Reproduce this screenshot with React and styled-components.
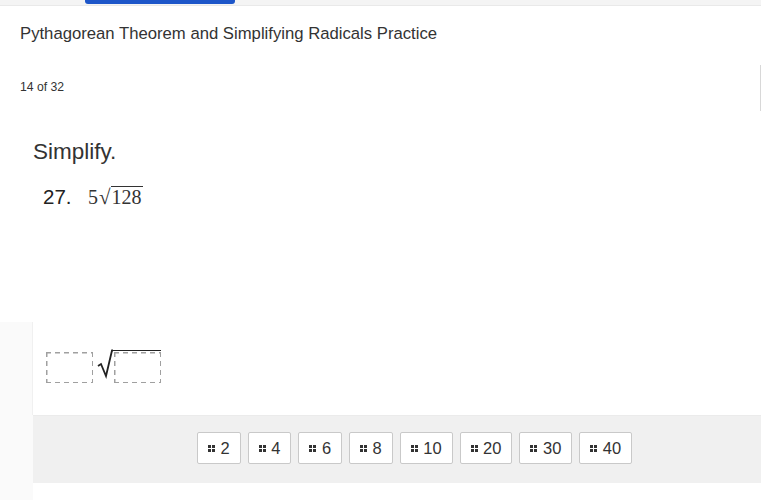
import React from "react";
import styled, { createGlobalStyle } from "styled-components";

const GlobalStyle = createGlobalStyle`
  html, body {
    margin: 0;
    padding: 0;
    background: #ffffff;
    font-family: 'Liberation Sans', Arial, sans-serif;
    color: #333333;
  }
`

const Page = styled.div`
  width: 761px;
  height: 500px;
  overflow: hidden;
  position: relative;
  background: linear-gradient(to right, #fafafa 0, #fafafa 33px, #ffffff 33px);
`

const TopBar = styled.div`
  height: 5px;
  background: #f4f4f4;
  border-bottom: 1px solid #e9e9e9;
  padding-left: 85px;
`

const TabMarker = styled.div`
  width: 150px;
  height: 4px;
  background: #1d56c9;
  border-radius: 0 0 3px 3px;
`

const Header = styled.div`
  background: #ffffff;
  padding: 19px 20px 0 20px;
  height: 110px;
  box-sizing: border-box;
`

const Title = styled.div`
  font-size: 16.7px;
  line-height: 18px;
  color: #333333;
`

const Counter = styled.div`
  margin-top: 37px;
  font-size: 12.2px;
  line-height: 14px;
  color: #333333;
`

const EdgeMark = styled.div`
  position: absolute;
  right: 0;
  top: 65px;
  width: 1px;
  height: 46px;
  background: #d8d8d8;
`

const Question = styled.div`
  padding: 23px 0 0 33px;
  height: 206px;
  box-sizing: border-box;
  background: #ffffff;
`

const Prompt = styled.div`
  font-size: 22.5px;
  line-height: 26px;
  color: #333333;
`

const ItemRow = styled.div`
  display: flex;
  align-items: baseline;
  margin-top: 20px;
  padding-left: 10px;
`

const ItemNum = styled.span`
  font-size: 20.5px;
  color: #222222;
  width: 45px;
`

const MathText = styled.span`
  font-family: 'Liberation Serif', 'Times New Roman', serif;
  font-size: 20px;
  color: #333333;
  display: inline-flex;
  align-items: baseline;
`

const RadSign = styled.span`
  font-size: 21px;
  margin-left: 1px;
`

const Radicand = styled.span`
  border-top: 1.5px solid #333333;
  padding: 0 1px 0 1px;
  line-height: 20px;
`

const AnswerPanel = styled.div`
  margin-left: 33px;
  height: 93px;
  background: #ffffff;
  box-shadow: -1px 0 0 #f0f0f0;
  padding: 30px 0 0 13px;
  box-sizing: border-box;
  display: flex;
  align-items: flex-start;
`

const dash = "#a0a0a0";

const DropBox = styled.div`
  width: 47px;
  height: 31px;
  box-sizing: border-box;
  background-image:
    repeating-linear-gradient(to right, ${dash} 0 5px, transparent 5px 9px),
    repeating-linear-gradient(to right, ${dash} 0 5px, transparent 5px 9px),
    repeating-linear-gradient(to bottom, ${dash} 0 5px, transparent 5px 9px),
    repeating-linear-gradient(to bottom, ${dash} 0 5px, transparent 5px 9px);
  background-size: 100% 1.5px, 100% 1.5px, 1.5px 100%, 1.5px 100%;
  background-position: 0 0, 0 100%, 0 0, 100% 0;
  background-repeat: no-repeat;
`

const AnswerRoot = styled.div`
  display: flex;
  align-items: flex-start;
  margin-left: 4px;
`

const RootSvg = styled.svg`
  display: block;
  margin-top: -3px;
`

const RootBody = styled.div`
  border-top: 1.5px solid #222222;
  margin-top: -2px;
  padding: 1px 0 0 1px;
`

const Tray = styled.div`
  margin-left: 33px;
  height: 68px;
  background: #f0f0f0;
  border-top: 1px solid #ebebeb;
  box-sizing: border-box;
  padding: 16px 0 0 164px;
  display: flex;
  gap: 7px;
`

const Chip = styled.div`
  height: 32px;
  box-sizing: border-box;
  padding: 0 10px;
  display: flex;
  align-items: center;
  gap: 5.5px;
  background: #ffffff;
  border: 1px solid #c9c9c9;
  border-radius: 2px;
  font-size: 16.5px;
  color: #333333;
`

const Grip = () => (
  <svg width="7" height="7" viewBox="0 0 7 7">
    <rect x="0" y="0" width="3" height="3" fill="#333" />
    <rect x="4" y="0" width="3" height="3" fill="#333" />
    <rect x="0" y="4" width="3" height="3" fill="#333" />
    <rect x="4" y="4" width="3" height="3" fill="#333" />
  </svg>
);

const choices = [2, 4, 6, 8, 10, 20, 30, 40];

const App = () => {
  return (
    <>
      <GlobalStyle />
      <Page>
        <TopBar>
          <TabMarker />
        </TopBar>
        <Header>
          <Title>Pythagorean Theorem and Simplifying Radicals Practice</Title>
          <Counter>14 of 32</Counter>
        </Header>
        <EdgeMark />
        <Question>
          <Prompt>Simplify.</Prompt>
          <ItemRow>
            <ItemNum>27.</ItemNum>
            <MathText>
              5<RadSign>√</RadSign>
              <Radicand>128</Radicand>
            </MathText>
          </ItemRow>
        </Question>
        <AnswerPanel>
          <DropBox />
          <AnswerRoot>
            <RootSvg width="16" height="30" viewBox="0 0 16 30">
              <path d="M1 17 L4 15 L9 27 L15 1.5 L16 1.5" fill="none" stroke="#222" strokeWidth="1.8" />
            </RootSvg>
            <RootBody>
              <DropBox />
            </RootBody>
          </AnswerRoot>
        </AnswerPanel>
        <Tray>
          {choices.map((c) => (
            <Chip key={c}>
              <Grip />
              {c}
            </Chip>
          ))}
        </Tray>
      </Page>
    </>
  );
};

export default App;
